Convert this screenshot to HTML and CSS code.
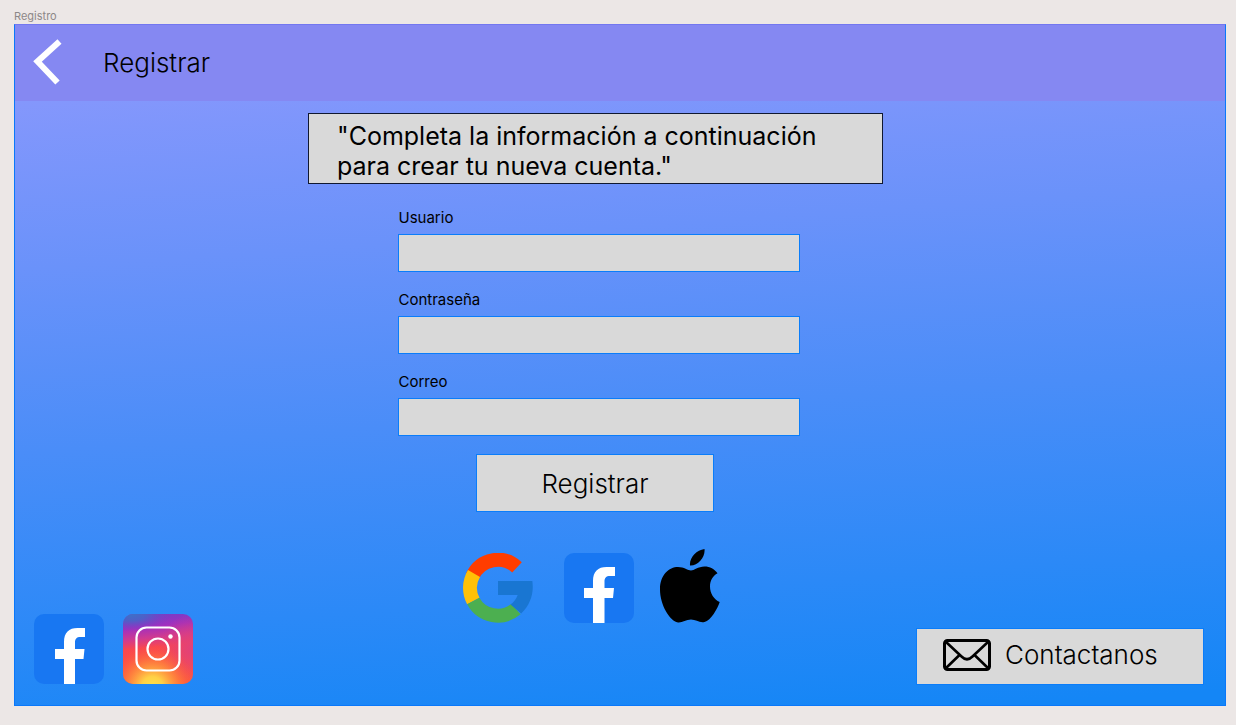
FILE: index.html
```html
<!DOCTYPE html>
<html lang="es">
<head>
<meta charset="utf-8">
<meta name="viewport" content="width=device-width, initial-scale=1">
<title>Registro</title>
<link rel="stylesheet" href="styles.css">
</head>
<body>
<div class="board-label">Registro</div>
<div class="screen">
  <header class="topbar">
    <button class="back" type="button" aria-label="Volver">
      <svg viewBox="0 0 30 48" width="30" height="48" aria-hidden="true"><path d="M26.500 2.500L4.500 22.500L24.500 43.500" fill="none" stroke="#fff" stroke-width="6"/></svg>
    </button>
    <h1 class="title">Registrar</h1>
  </header>
  <main class="main">
    <p class="notice">"Completa la información a continuación<br>para crear tu nueva cuenta."</p>
    <form class="form">
      <label class="label" for="usuario">Usuario</label>
      <input class="field" id="usuario" type="text">
      <label class="label" for="contrasena">Contraseña</label>
      <input class="field" id="contrasena" type="password">
      <label class="label" for="correo">Correo</label>
      <input class="field" id="correo" type="email">
      <button class="submit" type="submit">Registrar</button>
    </form>
  </main>
  <footer class="bottom">
    <nav class="links" aria-label="Redes sociales">
      <a class="icon-link" href="#" aria-label="Facebook">
        <svg viewBox="0 0 70 70" width="70" height="70" aria-hidden="true"><rect width="70" height="70" rx="10" fill="#1877f2"/><path d="M30 70V45H21V35H30V28C30 18.500 35 14 43.500 14H51V23H46.500C42.500 23 41 25 41 28.500V35H50.500L49.500 45H41V70Z" fill="#fff"/></svg>
      </a>
      <a class="icon-link" href="#" aria-label="Instagram">
        <svg viewBox="0 0 70 70" width="70" height="70" aria-hidden="true">
          <defs>
            <linearGradient id="ig-base" x1="0.550" y1="0" x2="0.650" y2="1"><stop offset="0" stop-color="#7a3cc4"/><stop offset=".16" stop-color="#a02fc0"/><stop offset=".32" stop-color="#d03a90"/><stop offset=".46" stop-color="#f9474f"/><stop offset="1" stop-color="#ff5a38"/></linearGradient>
            <radialGradient id="ig-glow" cx=".42" cy="1.050" r=".62"><stop offset="0" stop-color="#ffe34a"/><stop offset=".25" stop-color="#ffd046"/><stop offset=".6" stop-color="#ff8a3c" stop-opacity=".7"/><stop offset="1" stop-color="#ff5040" stop-opacity="0"/></radialGradient>
            <radialGradient id="ig-blue" cx=".1" cy="0" r=".5" gradientTransform="translate(.1 0) scale(1.200 .5) translate(-.1 0)"><stop offset="0" stop-color="#3c72c8"/><stop offset=".4" stop-color="#4a63c8" stop-opacity=".9"/><stop offset="1" stop-color="#7a3cc4" stop-opacity="0"/></radialGradient>
            <radialGradient id="ig-pink" cx="1" cy=".5" r=".5"><stop offset="0" stop-color="#e0407c"/><stop offset="1" stop-color="#e0407c" stop-opacity="0"/></radialGradient>
          </defs>
          <rect width="70" height="70" rx="10" fill="url(#ig-base)"/>
          <rect width="70" height="70" rx="10" fill="url(#ig-pink)"/>
          <rect width="70" height="70" rx="10" fill="url(#ig-glow)"/>
          <rect width="70" height="70" rx="10" fill="url(#ig-blue)"/>
          <rect x="13.500" y="13.500" width="43" height="43" rx="10" fill="none" stroke="#fff" stroke-width="2.200"/>
          <circle cx="35" cy="35" r="10.500" fill="none" stroke="#fff" stroke-width="2.200"/>
          <circle cx="47.500" cy="22.500" r="2.200" fill="#fff"/>
        </svg>
      </a>
    </nav>
    <div class="providers">
      <button class="provider" type="button" aria-label="Continuar con Google">
        <svg viewBox="0 0 70 70" width="70" height="70" aria-hidden="true" fill="none" stroke-width="14">
          <path d="M9.500 23A28 28 0 0 1 54 14.300" stroke="#ff3d00"/>
          <path d="M10.300 48A28 28 0 0 1 11 20.500" stroke="#ffc107"/>
          <path d="M53 56A28 28 0 0 1 10.300 48" stroke="#4caf50"/>
          <path d="M35 28H69.300C71 39.500 68 51 58.200 60.600L47.500 51.600Q52.500 48 54.700 42H35Z" fill="#1976d2"/>
        </svg>
      </button>
      <button class="provider" type="button" aria-label="Continuar con Facebook">
        <svg viewBox="0 0 70 70" width="70" height="70" aria-hidden="true"><rect width="70" height="70" rx="10" fill="#1877f2"/><path d="M29 70V45H20V35H29V28C29 18.500 34 14 42.500 14H51V23H46C42 23 40.500 25 40.500 28.500V35H50L49 45H40.500V70Z" fill="#fff"/></svg>
      </button>
      <button class="provider" type="button" aria-label="Continuar con Apple">
        <svg viewBox="0 0 60 74" width="60" height="74" aria-hidden="true"><path d="M44.500 0C45.500 8 38 17 30 16.500C29.300 8.500 36.500 1 44.500 0ZM31 21.500C34 21.500 38 17.500 44.500 17.500C50 17.500 54.500 20 57.500 24.300C53 27 50 31.500 50 37.500C50 44.500 54 50.500 59.700 53C57.500 59.500 51 71.500 44.500 73C39.500 74.200 36 70.500 31 70.500C26 70.500 22 74 18 73.500C9.500 72 0 55.500 0 40.500C0 26 9 18 18 18C24 18 28 21.500 31 21.500Z" fill="#000"/></svg>
      </button>
    </div>
    <button class="contact" type="button">
      <svg viewBox="0 0 48 32" width="48" height="32" aria-hidden="true" fill="none" stroke="#000" stroke-linejoin="round"><rect x="1.500" y="1.500" width="45" height="29" rx="3" stroke-width="3"/><path d="M2.500 2.500L18.500 17.500Q24 23 29.500 17.500L45.500 2.500M2.500 29.500L16.500 16M45.500 29.500L31.500 16" stroke-width="2.600"/></svg>
      <span>Contactanos</span>
    </button>
  </footer>
</div>
</body>
</html>
```
FILE: styles.css
```css
* {
  box-sizing: border-box;
}

body {
  margin: 0;
  padding: 8px 10px 19px 14px;
  min-height: 100vh;
  display: flex;
  flex-direction: column;
  background: #ece7e6;
  color: #000;
  font-family: Inter, "Liberation Sans", sans-serif;
}

button {
  margin: 0;
  padding: 0;
  border: 0;
  background: none;
  color: inherit;
  font: inherit;
  cursor: pointer;
}

svg {
  display: block;
}

.board-label {
  font-size: 11px;
  line-height: 16px;
  color: #8c8888;
}

.screen {
  flex: 1;
  display: flex;
  flex-direction: column;
  border: 1px solid #0a78fa;
  border-top-color: #7377f0;
  background: linear-gradient(176deg, #8497fc 10%, #6a92fa 32%, #4a8df8 56%, #2b89f7 80%, #1486f6 98%);
}

.topbar {
  display: flex;
  align-items: center;
  gap: 40px;
  height: 76px;
  padding-left: 18px;
  background: #8588f2;
}

.title {
  margin: 0;
  font-size: 26px;
  line-height: 32px;
  font-weight: 350;
}

.main {
  display: flex;
  flex-direction: column;
  align-items: center;
  padding: 12px 49px 0 0;
}

.notice {
  width: 575px;
  max-width: 100%;
  margin: 0;
  padding: 7px 28px 2px;
  border: 1px solid #101830;
  background: #d9d9d9;
  font-size: 25px;
  line-height: 30px;
}

.form {
  display: flex;
  flex-direction: column;
  width: 406px;
  max-width: 100%;
  padding: 24px 0 0 6px;
}

.label {
  font-size: 15px;
  line-height: 20px;
}

.field {
  width: 100%;
  height: 36px;
  margin: 7px 0 19px;
  padding: 0 12px;
  border: 0;
  border-radius: 0;
  outline: 1px solid #0a7dfa;
  background: #d9d9d9;
  font: inherit;
}

.submit {
  align-self: center;
  width: 236px;
  height: 56px;
  margin: 1px 7px 0 0;
  outline: 1px solid #0a7dfa;
  background: #d9d9d9;
  font-size: 26px;
  font-weight: 350;
}

.bottom {
  flex: 1;
  display: grid;
  grid-template-columns: 1fr auto 1fr;
  align-items: end;
  padding: 38px 22px 21px 19px;
}

.links {
  display: flex;
  gap: 19px;
}

.providers {
  align-self: start;
  display: flex;
  align-items: flex-end;
  margin-right: 54px;
}

.provider + .provider {
  margin-left: 31px;
}

.provider + .provider + .provider {
  margin-left: 26px;
}

.contact {
  justify-self: end;
  display: flex;
  align-items: center;
  gap: 14px;
  width: 286px;
  height: 55px;
  padding: 0 26px 4px;
  outline: 1px solid #0a7dfa;
  background: #d9d9d9;
  font-size: 26px;
  font-weight: 350;
}
```
